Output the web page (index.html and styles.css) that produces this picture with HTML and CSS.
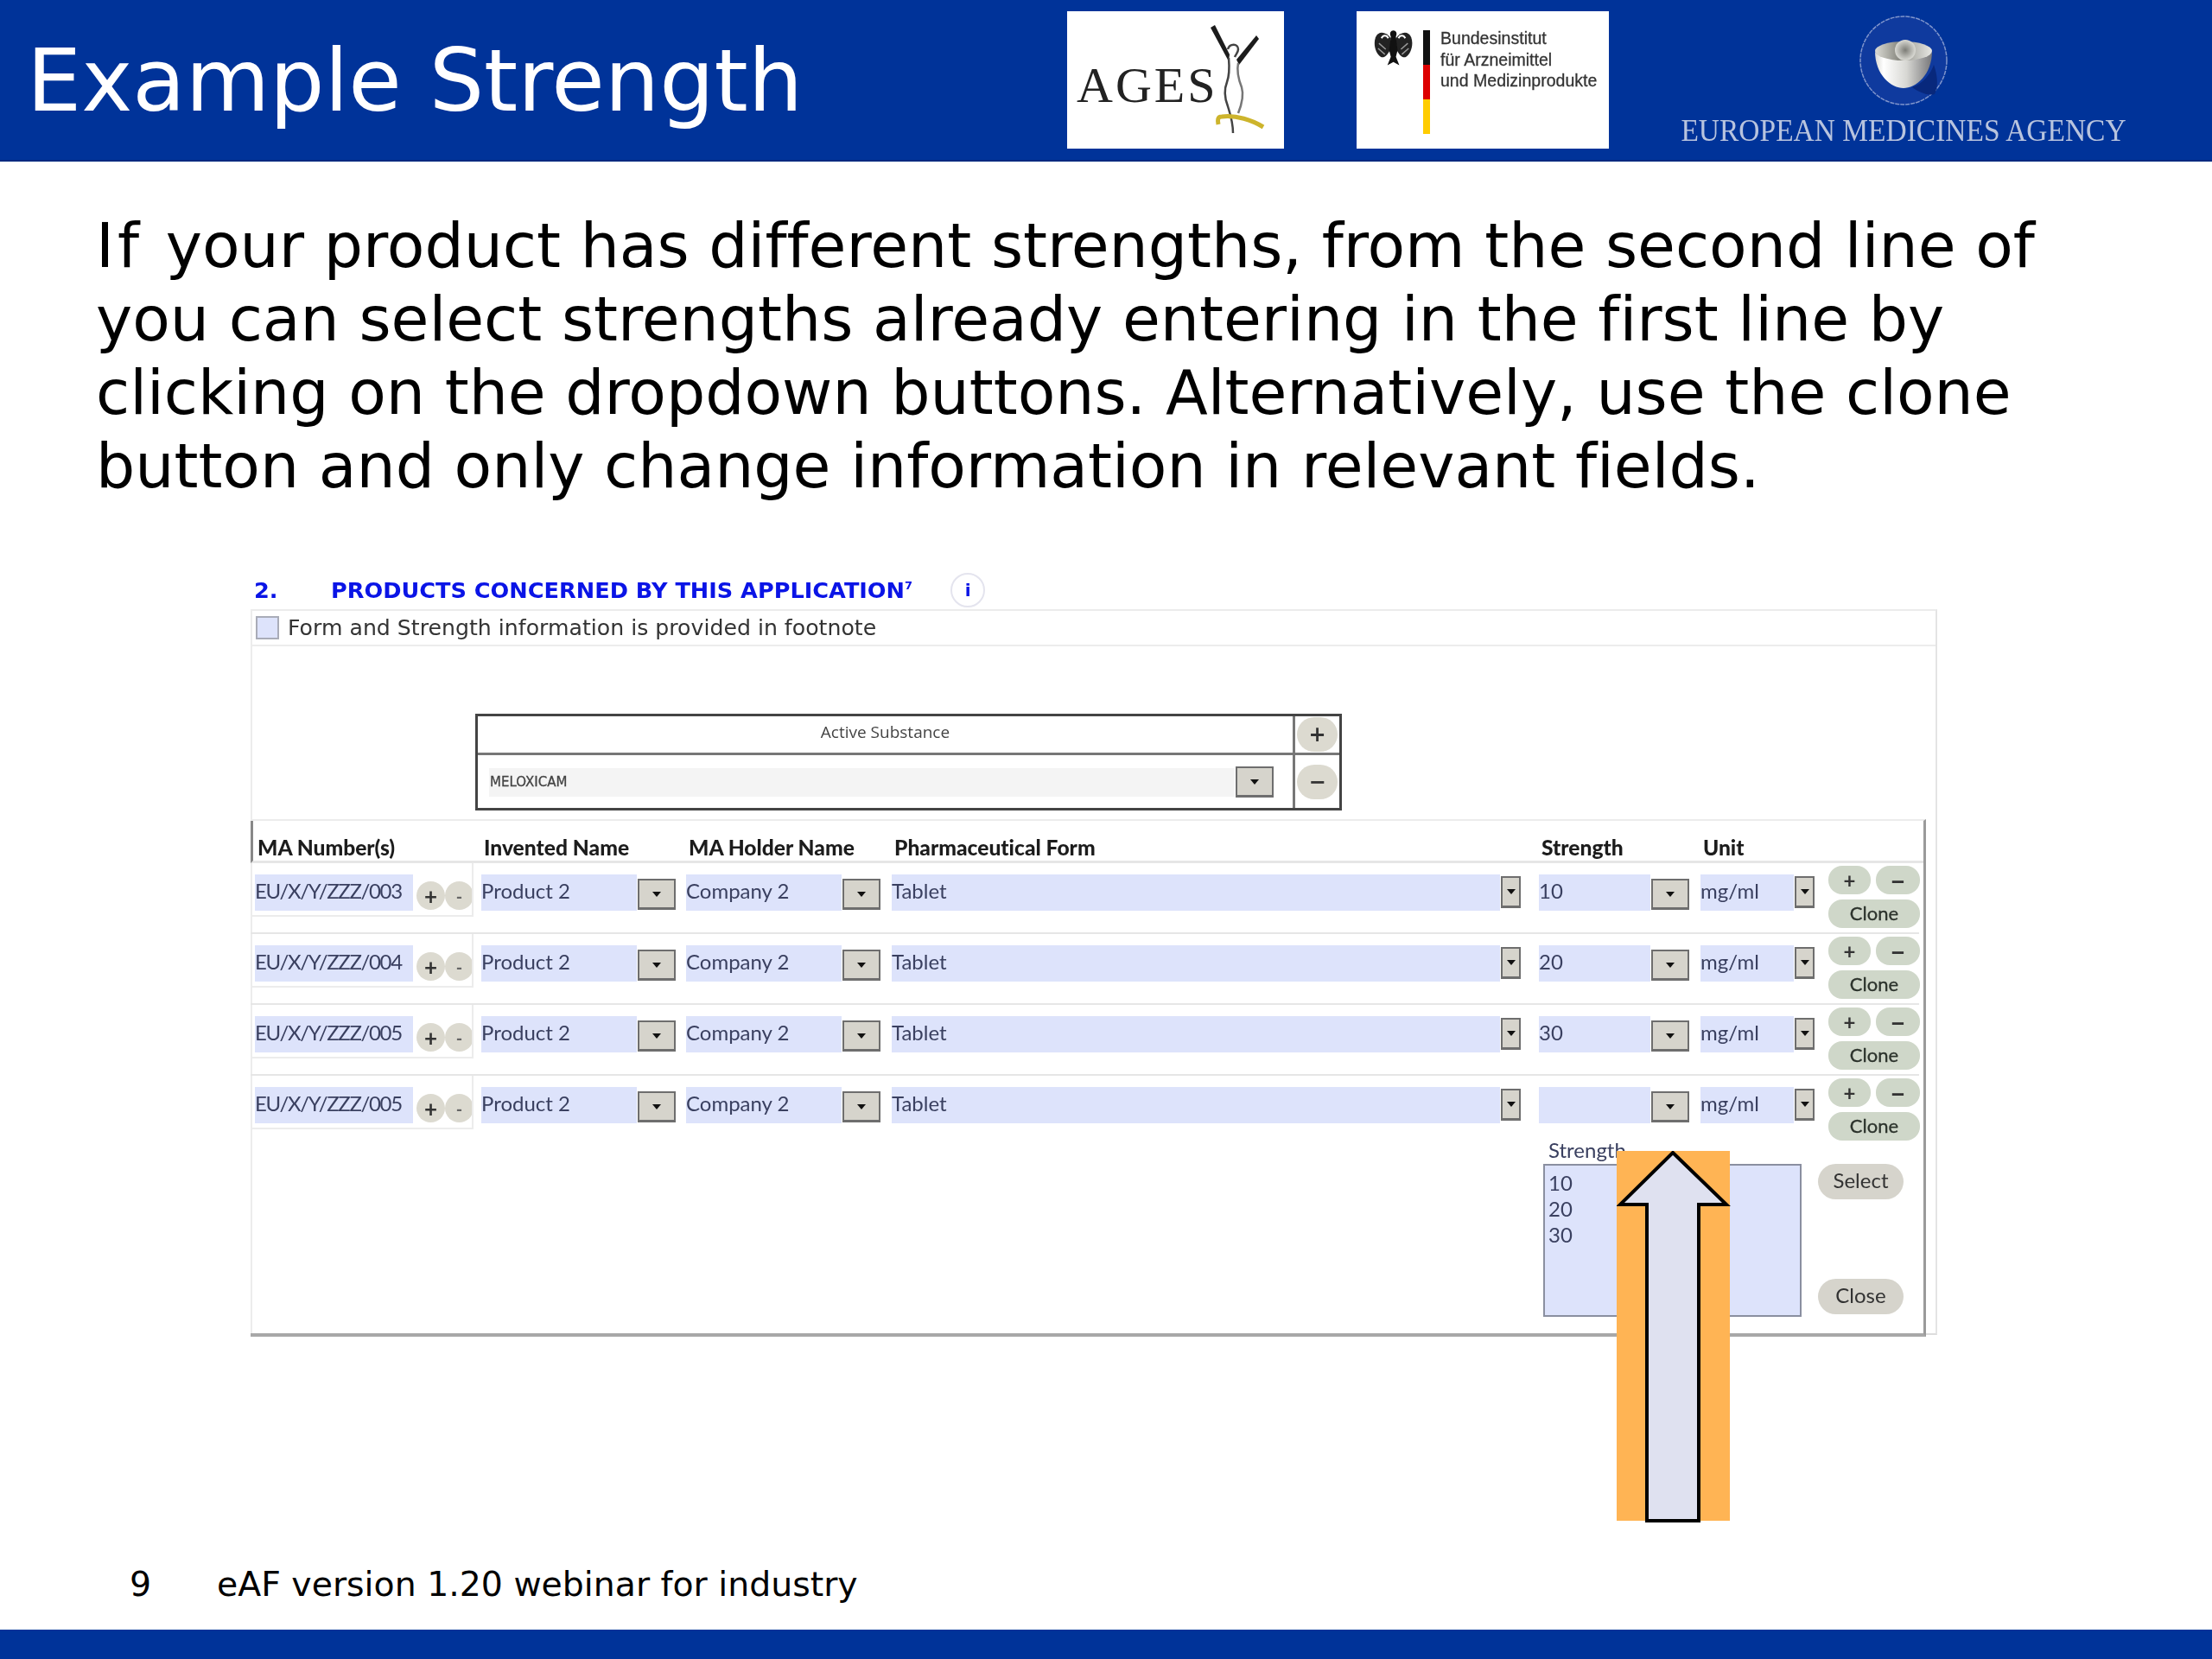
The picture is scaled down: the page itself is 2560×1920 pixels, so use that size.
FILE: index.html
```html
<!DOCTYPE html>
<html lang="en">
<head>
    <meta charset="UTF-8">
    <title>Example Strength</title>
    <link rel="stylesheet" href="styles.css">
</head>
<body>
    <!-- Slide header with logos -->
    <header class="slide-header">
        <h1 class="slide-title">Example Strength</h1>
        <div class="logo-box logo-ages">
            <span class="ages-text">AGES</span>
            <svg class="ages-figure" width="120" height="159" viewBox="0 0 120 159">
                <path d="M46 19L51 16L68 50L67 58Z" fill="#1c1c1c"/>
                <path d="M99 28L102 32L79 62L76 56Z" fill="#1c1c1c"/>
                <path d="M66 44C68 37 78 37 78 44C78 48 75 50 74 53" fill="none" stroke="#444" stroke-width="2.5"/>
                <path d="M67 54C68 66 68 74 65 82C61 92 62 100 66 110C69 120 72 128 72 141" fill="none" stroke="#444" stroke-width="2.5"/>
                <path d="M78 60C76 70 78 78 82 88C85 98 82 108 78 118" fill="none" stroke="#777" stroke-width="2.5"/>
                <path d="M55 131C54 126 54 122 59 122C76 120 94 126 107 134" fill="none" stroke="#cdb42c" stroke-width="5"/>
            </svg>
        </div>
        <div class="logo-box logo-bfarm">
            <svg class="eagle" width="46" height="44" viewBox="0 0 46 44">
                <path d="M20 11C13 2 5 3 2 10C-1 18 2 29 8 33C12 35 16 31 19 25Z" fill="#222"/>
                <path d="M26 11C33 2 41 3 44 10C47 18 44 29 38 33C34 35 30 31 27 25Z" fill="#222"/>
                <path d="M23 2C20 2 18 5 20 9L18 25L20 33L16 43L23 39L30 43L26 33L28 25L26 9C28 5 26 2 23 2Z" fill="#111"/>
                <path d="M9 11C11 7 15 7 17 11M37 11C35 7 31 7 29 11" fill="none" stroke="#fff" stroke-width="2"/>
                <path d="M6 17L14 24M5 23L13 30M40 17L32 24M41 23L33 30" fill="none" stroke="#999" stroke-width="1.5"/>
            </svg>
            <span class="flag-stripe"></span>
            <div class="bfarm-text">
                <span>Bundesinstitut</span>
                <span>für Arzneimittel</span>
                <span>und Medizinprodukte</span>
            </div>
        </div>
        <div class="logo-ema">
            <svg class="ema-mark" width="104" height="106" viewBox="0 0 104 106">
                <defs>
                    <linearGradient id="bowlSide" x1="0" x2="1" y1="0" y2="0">
                        <stop offset="0" stop-color="#d8d8d4"/>
                        <stop offset="0.15" stop-color="#ffffff"/>
                        <stop offset="0.55" stop-color="#d8d8d4"/>
                        <stop offset="1" stop-color="#77777a"/>
                    </linearGradient>
                    <linearGradient id="bowlInner" x1="0" x2="1" y1="0" y2="0">
                        <stop offset="0" stop-color="#dcdcd6"/>
                        <stop offset="0.4" stop-color="#8c8c84"/>
                        <stop offset="1" stop-color="#e8e8e4"/>
                    </linearGradient>
                    <radialGradient id="bowlBump">
                        <stop offset="0" stop-color="#7c7c76"/>
                        <stop offset="1" stop-color="#dadad4"/>
                    </radialGradient>
                </defs>
                <ellipse cx="52" cy="53" rx="50" ry="51" fill="#0f3a9e" stroke="#7f95cc" stroke-width="1.5" stroke-dasharray="5 1"/>
                <path d="M62 84C74 80 84 68 87 58C92 72 92 84 88 92C80 94 70 90 62 84Z" fill="#08287c"/>
                <path d="M19 42C19 70 38 85 52 85C66 85 85 70 85 42C85 54 19 54 19 42Z" fill="url(#bowlSide)"/>
                <ellipse cx="52" cy="42" rx="33" ry="11" fill="url(#bowlInner)"/>
                <circle cx="54" cy="41" r="12" fill="url(#bowlBump)"/>
            </svg>
            <span class="ema-text">EUROPEAN MEDICINES AGENCY</span>
        </div>
    </header>

    <main class="slide-body">
        <p class="intro"><span class="lead-words">If </span>your product has different strengths, from the second line of<br>you can select strengths already entering in the first line by<br>clicking on the dropdown buttons. Alternatively, use the clone<br>button and only change information in relevant fields.</p>

        <section class="form-shot">
            <div class="section-title">
                <span class="section-num">2.</span>
                <span class="section-name">PRODUCTS CONCERNED BY THIS APPLICATION<sup>7</sup></span>
                <span class="info-icon">i</span>
            </div>

            <div class="panel">
                <div class="check-row">
                    <span class="checkbox"></span>
                    <span>Form and Strength information is provided in footnote</span>
                </div>

                <!-- Active substance -->
                <div class="substance">
                    <div class="substance-main">
                        <div class="substance-head">Active Substance</div>
                        <div class="substance-cell">
                            <div class="substance-field">MELOXICAM</div>
                            <span class="drop"></span>
                        </div>
                    </div>
                    <div class="substance-side">
                        <div class="side-cell side-top"><span class="round-btn">+</span></div>
                        <div class="side-cell side-bottom"><span class="round-btn round-minus">&minus;</span></div>
                    </div>
                </div>

                <!-- Products table -->
                <div class="products">
                    <div class="grid-row head-row">
                        <div>MA Number(s)</div>
                        <div>Invented Name</div>
                        <div>MA Holder Name</div>
                        <div>Pharmaceutical Form</div>
                        <div>Strength</div>
                        <div>Unit</div>
                        <div></div>
                    </div>

                    <div class="grid-row product-row">
                        <div class="cell ma-cell"><div class="field">EU/X/Y/ZZZ/003</div><span class="mini-btn">+</span><span class="mini-btn mini-minus">-</span></div>
                        <div class="cell pad-12"><div class="field">Product 2</div><span class="drop"></span></div>
                        <div class="cell pad-13"><div class="field">Company 2</div><span class="drop"></span></div>
                        <div class="cell pad-21"><div class="field">Tablet</div><span class="drop drop-narrow"></span></div>
                        <div class="cell pad-13"><div class="field">10</div><span class="drop"></span></div>
                        <div class="cell pad-16"><div class="field">mg/ml</div><span class="drop drop-narrow"></span></div>
                        <div class="actions"><span class="pill">+</span><span class="pill pill-minus">&minus;</span><span class="pill pill-clone">Clone</span></div>
                    </div>
                    <div class="grid-row product-row">
                        <div class="cell ma-cell"><div class="field">EU/X/Y/ZZZ/004</div><span class="mini-btn">+</span><span class="mini-btn mini-minus">-</span></div>
                        <div class="cell pad-12"><div class="field">Product 2</div><span class="drop"></span></div>
                        <div class="cell pad-13"><div class="field">Company 2</div><span class="drop"></span></div>
                        <div class="cell pad-21"><div class="field">Tablet</div><span class="drop drop-narrow"></span></div>
                        <div class="cell pad-13"><div class="field">20</div><span class="drop"></span></div>
                        <div class="cell pad-16"><div class="field">mg/ml</div><span class="drop drop-narrow"></span></div>
                        <div class="actions"><span class="pill">+</span><span class="pill pill-minus">&minus;</span><span class="pill pill-clone">Clone</span></div>
                    </div>
                    <div class="grid-row product-row">
                        <div class="cell ma-cell"><div class="field">EU/X/Y/ZZZ/005</div><span class="mini-btn">+</span><span class="mini-btn mini-minus">-</span></div>
                        <div class="cell pad-12"><div class="field">Product 2</div><span class="drop"></span></div>
                        <div class="cell pad-13"><div class="field">Company 2</div><span class="drop"></span></div>
                        <div class="cell pad-21"><div class="field">Tablet</div><span class="drop drop-narrow"></span></div>
                        <div class="cell pad-13"><div class="field">30</div><span class="drop"></span></div>
                        <div class="cell pad-16"><div class="field">mg/ml</div><span class="drop drop-narrow"></span></div>
                        <div class="actions"><span class="pill">+</span><span class="pill pill-minus">&minus;</span><span class="pill pill-clone">Clone</span></div>
                    </div>
                    <div class="grid-row product-row last-row">
                        <div class="cell ma-cell"><div class="field">EU/X/Y/ZZZ/005</div><span class="mini-btn">+</span><span class="mini-btn mini-minus">-</span></div>
                        <div class="cell pad-12"><div class="field">Product 2</div><span class="drop"></span></div>
                        <div class="cell pad-13"><div class="field">Company 2</div><span class="drop"></span></div>
                        <div class="cell pad-21"><div class="field">Tablet</div><span class="drop drop-narrow"></span></div>
                        <div class="cell pad-13"><div class="field"></div><span class="drop"></span></div>
                        <div class="cell pad-16"><div class="field">mg/ml</div><span class="drop drop-narrow"></span></div>
                        <div class="actions"><span class="pill">+</span><span class="pill pill-minus">&minus;</span><span class="pill pill-clone">Clone</span></div>
                    </div>

                    <!-- Strength picker -->
                    <div class="picker">
                        <div class="picker-list">
                            <div class="picker-label">Strength</div>
                            <div class="listbox">
                                <div>10</div>
                                <div>20</div>
                                <div>30</div>
                            </div>
                        </div>
                        <div class="picker-buttons">
                            <span class="picker-btn">Select</span>
                            <span class="picker-btn">Close</span>
                        </div>
                    </div>
                </div>

                <!-- Callout arrow over the picker -->
                <svg class="callout" width="132" height="430" viewBox="0 0 132 430">
                    <rect x="0" y="0" width="131" height="428" fill="#ffb454"/>
                    <path d="M65 2L127 62H95V428H35V62H4Z" fill="#dfe1f0" stroke="#000" stroke-width="4" stroke-linejoin="miter"/>
                </svg>
            </div>
        </section>
    </main>

    <footer class="slide-footer">
        <div class="footer-text">
            <span class="page-num">9</span>
            <span>eAF version 1.20 webinar for industry</span>
        </div>
        <div class="footer-bar"></div>
    </footer>
</body>
</html>
```

FILE: styles.css
```css
/* Slide frame */
body {
    margin: 0;
    width: 2560px;
    height: 1920px;
    display: flex;
    flex-direction: column;
    background-color: #ffffff;
    font-family: "DejaVu Sans", sans-serif;
    font-variant-ligatures: none;
    color: #000000;
    overflow: hidden;
}

/* Header */
.slide-header {
    height: 187px;
    flex-shrink: 0;
    display: flex;
    align-items: flex-start;
    background-color: #003399;
    box-sizing: border-box;
    border-bottom: 2px solid #00297f;
}

.slide-title {
    margin: 0 0 0 31px;
    width: 1204px;
    font-size: 100px;
    font-weight: normal;
    line-height: 188px;
    color: #ffffff;
}

.logo-box {
    position: relative;
    height: 159px;
    margin-top: 13px;
    background-color: #ffffff;
    filter: blur(0.7px);
}

.logo-ages {
    width: 251px;
}

.ages-text {
    position: absolute;
    left: 11px;
    top: 51px;
    font-family: "Liberation Serif", serif;
    font-size: 58px;
    line-height: 70px;
    letter-spacing: 3px;
    color: #222222;
}

.ages-figure {
    position: absolute;
    left: 120px;
    top: 0;
}

.logo-bfarm {
    width: 292px;
    margin-left: 84px;
    display: flex;
    align-items: flex-start;
}

.eagle {
    margin: 20px 0 0 20px;
}

.flag-stripe {
    width: 8px;
    height: 120px;
    margin: 22px 12px 0 12px;
    background: linear-gradient(#111111 0 33.3%, #dd0000 33.3% 66.6%, #ffcc00 66.6%);
}

.bfarm-text {
    display: flex;
    flex-direction: column;
    margin-top: 19px;
    font-family: "Liberation Sans", sans-serif;
    font-size: 21px;
    line-height: 24.5px;
    color: #333333;
    -webkit-text-stroke: 0.3px #333333;
    transform: scaleX(0.93);
    transform-origin: left top;
    white-space: nowrap;
}

.logo-ema {
    width: 520px;
    margin-left: 81px;
    margin-top: 17px;
    display: flex;
    flex-direction: column;
    align-items: center;
    filter: blur(0.6px);
}

.ema-text {
    margin-top: 9px;
    font-family: "Liberation Serif", serif;
    font-size: 36px;
    line-height: 38px;
    color: #b8c4de;
    transform: scaleX(0.93);
    white-space: nowrap;
}

/* Slide body */
.slide-body {
    flex: 1;
}

.intro {
    margin: 55px 0 0 111px;
    font-size: 71.3px;
    line-height: 85px;
}

.lead-words {
    letter-spacing: 4px;
}

.form-shot {
    width: 1952px;
    margin: 79px 0 0 290px;
    font-family: Lato, sans-serif;
    color: #3a4060;
    filter: blur(0.5px);
}

.section-title {
    height: 44px;
    display: flex;
    align-items: center;
    font-family: "DejaVu Sans", sans-serif;
    font-size: 25.6px;
    font-weight: bold;
    color: #0a14e6;
}

.section-num {
    width: 93px;
    padding-left: 4px;
    box-sizing: border-box;
}

.section-name sup {
    font-size: 13px;
    line-height: 0;
}

.info-icon {
    width: 40px;
    height: 40px;
    margin-left: 44px;
    border: 2px solid #e4e4ee;
    border-radius: 50%;
    box-sizing: border-box;
    display: flex;
    align-items: center;
    justify-content: center;
    font-size: 20px;
}

.panel {
    position: relative;
    height: 840px;
    box-sizing: border-box;
    border-top: 2px solid #ececec;
    border-right: 2px solid #e4e4e4;
    border-bottom: 2px solid #dddddd;
    border-left: 2px solid #ececec;
}

.check-row {
    height: 39px;
    display: flex;
    align-items: center;
    gap: 10px;
    padding-left: 4px;
    border-bottom: 2px solid #ececec;
    font-family: "DejaVu Sans", sans-serif;
    font-size: 25.2px;
    line-height: 36px;
    color: #333333;
}

.checkbox {
    width: 27px;
    height: 27px;
    box-sizing: border-box;
    border: 2px solid #a9acb8;
    background-color: #dde3fb;
}

/* Active substance box */
.substance {
    width: 1003px;
    height: 112px;
    margin: 78px 0 0 258px;
    box-sizing: border-box;
    display: flex;
    border: 3px solid #444444;
}

.substance-main {
    width: 943px;
    border-right: 3px solid #777777;
}

.substance-head {
    height: 42px;
    border-bottom: 3px solid #777777;
    text-align: center;
    font-family: "Open Sans", sans-serif;
    font-size: 19px;
    line-height: 37px;
    color: #444444;
}

.substance-cell {
    display: flex;
    align-items: center;
    margin-top: 13px;
    padding-left: 13px;
}

.substance-field {
    width: 862px;
    height: 33px;
    padding-left: 1px;
    background-color: #f4f4f4;
    font-family: "DejaVu Sans", sans-serif;
    font-size: 15px;
    line-height: 33px;
    -webkit-text-stroke: 0.3px #444444;
    color: #444444;
}

.substance-side {
    flex: 1;
    display: flex;
    flex-direction: column;
}

.side-cell {
    display: flex;
    justify-content: center;
    align-items: center;
}

.side-top {
    height: 42px;
    border-bottom: 3px solid #777777;
}

.side-bottom {
    flex: 1;
}

.round-btn {
    width: 47px;
    height: 40px;
    border-radius: 20px;
    background-color: #dcdad0;
    display: flex;
    align-items: center;
    justify-content: center;
    font-family: "DejaVu Sans", sans-serif;
    font-size: 24px;
    font-weight: bold;
    color: #333333;
}

/* Dropdown button */
.drop {
    width: 44px;
    height: 36px;
    flex-shrink: 0;
    margin-left: 1px;
    box-sizing: border-box;
    display: flex;
    align-items: center;
    justify-content: center;
    background-color: #d6d4cc;
    border: 2px solid #6e6e6e;
    border-bottom-width: 3px;
}

.drop::after {
    content: "";
    border-top: 6px solid #111111;
    border-left: 5px solid transparent;
    border-right: 5px solid transparent;
}

.drop-narrow {
    width: 23px;
    height: 37px;
    margin-top: -4px;
}

/* Products table */
.products {
    width: 1939px;
    height: 599px;
    margin: 10px 0 0 -2px;
    box-sizing: border-box;
    border-top: 2px solid #ececec;
    border-right: 3px solid #9a9a9a;
    border-bottom: 4px solid #a8a8a8;
}

.grid-row {
    display: grid;
    grid-template-columns: 262px 237px 238px 749px 187px 148px 106px;
    padding-left: 5px;
}

.head-row {
    height: 49px;
    box-sizing: border-box;
    border-bottom: 3px solid #e6e6e6;
    border-left: 3px solid #888888;
    padding-left: 5px;
    font-size: 24.6px;
    font-weight: 900;
    line-height: 62px;
    color: #1c1c1c;
}

.product-row {
    height: 82px;
    box-sizing: border-box;
    border-bottom: 2px solid #e6e6e6;
    margin-right: 5px;
}

.last-row {
    border-bottom: none;
}

.cell {
    height: 42px;
    margin-top: 13px;
    display: flex;
    align-items: center;
    font-size: 24px;
}

.cell .drop {
    margin-top: 4px;
}

.cell .drop-narrow {
    margin-top: -1px;
}

.field {
    flex: 1;
    height: 42px;
    overflow: hidden;
    background-color: #dde3fb;
    line-height: 38px;
}

.pad-12 {
    padding-right: 12px;
}

.pad-13 {
    padding-right: 13px;
}

.pad-16 {
    padding-right: 16px;
}

.pad-21 {
    padding-right: 21px;
}

/* MA cell has its own small box */
.ma-cell {
    position: relative;
    margin-right: 9px;
}

.ma-cell::after {
    content: "";
    position: absolute;
    left: -5px;
    right: 0;
    top: -13px;
    bottom: -7px;
    border-right: 2px solid #ececec;
    border-bottom: 2px solid #ececec;
}

.ma-cell .field {
    flex: 0 0 183px;
    letter-spacing: -1.35px;
}

.mini-btn {
    width: 33px;
    height: 33px;
    flex-shrink: 0;
    margin-top: 7px;
    border-radius: 50%;
    background-color: #dcdad0;
    display: flex;
    align-items: center;
    justify-content: center;
    font-size: 26px;
    font-weight: bold;
    color: #333333;
}

.mini-btn:first-of-type {
    margin-left: 4px;
}

.mini-minus {
    color: #666666;
    font-size: 20px;
}

.actions {
    display: grid;
    grid-template-columns: 49px 51px;
    grid-auto-rows: 33px;
    column-gap: 6px;
    row-gap: 6px;
    margin-top: 3px;
    height: 72px;
}

.pill {
    border-radius: 16px;
    background-color: #cfd7c9;
    display: flex;
    align-items: center;
    justify-content: center;
    font-size: 24px;
    font-weight: bold;
    color: #333333;
}

.pill-minus {
    font-size: 30px;
}

.pill-clone {
    grid-column: 1 / 3;
    padding-bottom: 2px;
    box-sizing: border-box;
    font-size: 22px;
    font-weight: normal;
    color: #2c332c;
    -webkit-text-stroke: 0.3px #2c332c;
}

/* Strength picker */
.picker {
    display: flex;
    margin: -11px 0 0 1496px;
    font-size: 24px;
}

.picker-label {
    height: 31px;
    padding-left: 6px;
    line-height: 30px;
}

.listbox {
    width: 299px;
    height: 177px;
    box-sizing: border-box;
    padding: 5px 4px;
    border: 2px solid #8a8fa0;
    background-color: #dde3fb;
    line-height: 30px;
}

.picker-buttons {
    display: flex;
    flex-direction: column;
    justify-content: space-between;
    width: 99px;
    height: 174px;
    margin: 31px 0 0 19px;
}

.picker-btn {
    height: 41px;
    border-radius: 21px;
    background-color: #d6d4cc;
    text-align: center;
    line-height: 38px;
    color: #333333;
}

.callout {
    position: absolute;
    left: 1579px;
    top: 625px;
}

/* Footer */
.slide-footer {
    flex-shrink: 0;
}

.footer-text {
    display: flex;
    align-items: center;
    height: 46px;
    padding-bottom: 30px;
    font-size: 39.4px;
}

.page-num {
    width: 101px;
    margin-left: 150px;
}

.footer-bar {
    height: 34px;
    background-color: #003399;
}
```
